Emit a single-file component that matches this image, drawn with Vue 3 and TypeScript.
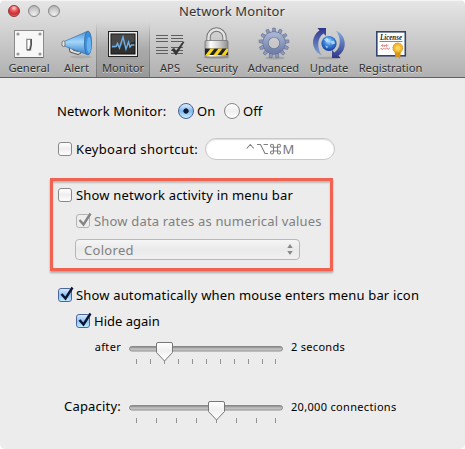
<script setup lang="ts">
import { ref } from 'vue'

interface Tool {
  id: string
  label: string
}

const tools: Tool[] = [
  { id: 'general', label: 'General' },
  { id: 'alert', label: 'Alert' },
  { id: 'monitor', label: 'Monitor' },
  { id: 'aps', label: 'APS' },
  { id: 'security', label: 'Security' },
  { id: 'advanced', label: 'Advanced' },
  { id: 'update', label: 'Update' },
  { id: 'registration', label: 'Registration' },
]
const active = ref('monitor')
const enabled = ref(true)

const delayTicks: number[] = [7.5, 21.5, 35.5, 49.5, 63.5, 77.5, 91.5, 105.5, 119.5, 133.5, 146.5]
const capacityTicks: number[] = [7.5, 27.5, 47.5, 67.5, 87.5, 107.5, 127.5, 146.5]
const teeth: number[] = Array.from({ length: 13 }, (_, i) => (i * 360) / 13)
</script>

<template>
  <div class="window">
    <svg class="defs" width="0" height="0">
      <defs>
        <linearGradient id="thumb" x1="0" y1="0" x2="0" y2="1">
          <stop offset="0" stop-color="#fff" /><stop offset=".45" stop-color="#f0f0f0" /><stop offset="1" stop-color="#fff" />
        </linearGradient>
        <linearGradient id="track" x1="0" y1="0" x2="0" y2="1">
          <stop offset="0" stop-color="#777" /><stop offset=".4" stop-color="#b4b4b4" /><stop offset="1" stop-color="#cfcfcf" />
        </linearGradient>
        <linearGradient id="horn" x1="0" y1="0" x2="0" y2="1">
          <stop offset="0" stop-color="#4d95d6" /><stop offset=".45" stop-color="#a5d6fb" /><stop offset="1" stop-color="#3580c8" />
        </linearGradient>
        <linearGradient id="steel" x1="0" y1="0" x2="1" y2="0">
          <stop offset="0" stop-color="#a5a5a5" /><stop offset=".25" stop-color="#fff" /><stop offset=".6" stop-color="#d2d2d2" /><stop offset="1" stop-color="#8d8d8d" />
        </linearGradient>
        <linearGradient id="gear" x1="0" y1="0" x2="0" y2="1">
          <stop offset="0" stop-color="#a7b3d3" /><stop offset="1" stop-color="#7180a9" />
        </linearGradient>
        <radialGradient id="globe" cx=".5" cy=".35" r=".65">
          <stop offset="0" stop-color="#b9e2ff" /><stop offset=".45" stop-color="#3f86dd" /><stop offset="1" stop-color="#143d9d" />
        </radialGradient>
        <linearGradient id="arcl" x1="0" y1="0" x2="0" y2="1">
          <stop offset="0" stop-color="#30358b" /><stop offset="1" stop-color="#7ea5d8" />
        </linearGradient>
        <linearGradient id="arcr" x1="0" y1="0" x2="0" y2="1">
          <stop offset="0" stop-color="#86aede" /><stop offset="1" stop-color="#30358b" />
        </linearGradient>
      </defs>
    </svg>

    <header class="chrome">
      <div class="titlebar">
        <div class="lights"><i class="light red"></i><i class="light"></i><i class="light"></i></div>
        <h1 class="title">Network Monitor</h1>
      </div>
      <nav class="toolbar">
        <button v-for="t in tools" :key="t.id" class="tool" :class="[t.id, { active: active === t.id }]" @click="active = t.id">
          <svg class="icon" width="32" height="34" viewBox="0 0 32 34">
            <g v-if="t.id === 'general'">
              <rect x="1.5" y="4.5" width="29" height="27" fill="#f7f7f7" stroke="#8b8b8b" />
              <path d="M2 31.5H30" stroke="#666" />
              <g fill="#9a9a9a"><circle cx="5" cy="8" r="1.6" /><circle cx="27" cy="8" r="1.6" /><circle cx="5" cy="28" r="1.6" /><circle cx="27" cy="28" r="1.6" /></g>
              <rect x="13.5" y="13" width="4.500" height="11" fill="#e4e4e4" stroke="#aaa" stroke-width=".8" />
              <path d="M14 13.500h3.500v5l-1 5H14z" fill="#fff" stroke="#777" stroke-width=".8" /><path d="M18.300 13v6l-1.300 5h-3" fill="none" stroke="#444" stroke-width="1.200" />
            </g>
            <g v-else-if="t.id === 'alert'">
              <ellipse cx="20" cy="31" rx="11" ry="1.500" fill="#999" opacity=".5" />
              <path d="M8 21l1 5 8 2.500 3-1.500-1-3-2 1.500-5-1.500v-4" fill="#ddd" stroke="#555" />
              <path d="M2 16L26 5.500v23L2 19.500z" fill="url(#horn)" stroke="#3774ad" stroke-width=".7" />
              <ellipse cx="27" cy="17" rx="3.600" ry="12" fill="#3e8fdb" stroke="#28669f" stroke-width=".7" />
              <ellipse cx="28" cy="19" rx="2.200" ry="8" fill="#66b3f0" />
              <rect x="1" y="15" width="3" height="5.500" rx="1.400" fill="#e1e5e8" stroke="#555" stroke-width=".7" />
            </g>
            <g v-else-if="t.id === 'monitor'">
              <rect x="1.500" y="5.500" width="29" height="25" fill="#ececec" stroke="#222" />
              <rect x="4" y="8" width="24" height="20" fill="#303030" stroke="#111" />
              <path d="M4.500 8.500h23v7l-23 7z" fill="#484848" />
              <path d="M5 20.500h4l1.500-3 2 4.500 3.500-11 3 12 2.500-7 1.500 5 1.500-2h3" fill="none" stroke="#6cb0e6" stroke-width="1.400" />
              <path d="M2 32h28" stroke="#999" />
            </g>
            <g v-else-if="t.id === 'aps'">
              <path d="M2 9.500h12M2 12.500h12M2 15.500h12M17 9.500h12M17 12.500h12M17 15.500h12M2 21.500h12M2 24.500h12M2 27.500h12M17 21.500h12M17 24.500h12M17 27.500h12" stroke="#5e5e5e" stroke-width="1" />
              <path d="M18 23.500l2.200-1 1.800 3 6.500-9 1.500-.5-8 13z" fill="#333" stroke="#333" stroke-width=".8" />
            </g>
            <g v-else-if="t.id === 'security'">
              <ellipse cx="15.500" cy="31.500" rx="13" ry="1.300" fill="#888" opacity=".6" />
              <path d="M7.500 16V11.500a8 8 0 0 1 16 0V16" fill="none" stroke="#777" stroke-width="4.400" />
              <path d="M7.500 16V11.500a8 8 0 0 1 16 0V16" fill="none" stroke="#e4e4e4" stroke-width="2.400" />
              <rect x="4" y="14.500" width="23" height="16.500" rx="1" fill="url(#steel)" stroke="#777" stroke-width=".8" />
              <rect x="4" y="22.500" width="23" height="6.500" fill="#222" />
              <path d="M4.500 29l5-6.500h4L8.500 29zM12.500 29l5-6.500h4L16.500 29zM20.500 29l5-6.500H27v3L24.500 29z" fill="#f6d417" />
            </g>
            <g v-else-if="t.id === 'advanced'">
              <ellipse cx="17" cy="32" rx="10" ry="1.500" fill="#888" opacity=".5" />
              <g fill="#8c99bd" stroke="#596586" stroke-width=".5"><path v-for="a in teeth" :key="a" d="M14 7l.7-5h2.600l.7 5z" :transform="`rotate(${a} 16 17)`" /></g>
              <circle cx="16" cy="17" r="8.400" fill="none" stroke="#596586" stroke-width="6" />
              <circle cx="16" cy="17" r="8.400" fill="none" stroke="url(#gear)" stroke-width="5.100" />
            </g>
            <g v-else-if="t.id === 'update'">
              <ellipse cx="16" cy="32" rx="12" ry="1.300" fill="#888" opacity=".5" />
              <path d="M9 29.500C-3 24 -2 10 6.500 4.500L4.500 2H13v8l-2.500-2.500C4 12 3.500 22 9 29.500z" fill="url(#arcl)" />
              <path d="M23 4.500C34.500 10 34 24 25.500 29.500l2 2.500H19v-8l2.500 2.500C28 22 28.500 12 23 4.500z" fill="url(#arcr)" />
              <circle cx="16" cy="17.500" r="7.600" fill="url(#globe)" />
              <path d="M11 13.500l3-2 2 2-2 3zM18 15.500l3-1 1 3-3 1zM12 19.500l3 1-1 2zM18 21.500l2-1" fill="#c2eaff" opacity=".8" />
            </g>
            <g v-else>
              <rect x="1.800" y="5.800" width="28.500" height="24" fill="#fff" stroke="#34466f" stroke-width="1.600" />
              <text x="5" y="14" class="license" textLength="22" lengthAdjust="spacingAndGlyphs">License</text>
              <path d="M4.500 15.500h23" stroke="#555" stroke-width=".7" />
              <path d="M6 20l1.500-1.500v2l2-1.500v1.500l2-2v2l2-1.500M5 23.500l1.500-1.500.5 1.500 2-1 1 .8 2-1.500 1 1.500 2-1.500" fill="none" stroke="#e08080" stroke-width=".9" />
              <path d="M19.500 25l1 7 2-1.500L25 33l1-8z" fill="#d6941a" />
              <circle cx="22.800" cy="22" r="5" fill="#f2b72d" stroke="#cc8e16" stroke-width=".8" stroke-dasharray="1.800 .7" />
              <circle cx="22.800" cy="22" r="2.600" fill="#fbd559" />
            </g>
          </svg>
          <span class="label">{{ t.label }}</span>
        </button>
      </nav>
    </header>

    <main class="form">
      <div class="row power">
        <span class="t-power">Network Monitor:</span>
        <i class="radio" :class="{ on: enabled }" @click="enabled = true"></i><span class="t-on">On</span>
        <i class="radio second" :class="{ on: !enabled }" @click="enabled = false"></i><span class="t-off">Off</span>
      </div>
      <div class="row shortcut">
        <i class="check"></i><span class="t-key">Keyboard shortcut:</span>
        <div class="field">
          <svg width="36" height="12" viewBox="0 0 36 12" fill="none" stroke="#808080" stroke-width="1.100">
            <path d="M.8 5.500L4.300 1.500l3.500 4M11 1.500h3.500l4.500 9h3M17.500 1.500H22" />
            <path d="M27.500 4v4.500M31.500 4v4.500M27.500 4.300h4M27.500 8h4M27.500 4.300H26a1.500 1.500 0 1 1 1.500-1.500zM31.500 4.300H33a1.500 1.500 0 1 0-1.500-1.500zM27.500 8H26a1.500 1.500 0 1 0 1.500 1.500zM31.500 8H33a1.500 1.500 0 1 1-1.500 1.500z" />
          </svg>
          <span>M</span>
        </div>
      </div>

      <section class="highlight">
        <div class="row"><i class="check"></i><span class="t-activity">Show network activity in menu bar</span></div>
        <div class="row sub off">
          <i class="check on"><svg width="18" height="18" viewBox="0 0 18 18"><path d="M3.500 8l4 4.500L14.500 1.500" /></svg></i>
          <span class="t-rates">Show data rates as numerical values</span>
        </div>
        <div class="select">
          <span class="t-colored">Colored</span>
          <svg width="6" height="11" viewBox="0 0 6 11"><path d="M3 0l2.700 4H.3zM3 11L.3 7h5.400z" fill="#888" /></svg>
        </div>
      </section>

      <div class="row auto">
        <i class="check on"><svg width="18" height="18" viewBox="0 0 18 18"><path d="M3.500 8l4 4.500L14.500 1.500" /></svg></i>
        <span class="t-auto">Show automatically when mouse enters menu bar icon</span>
      </div>
      <div class="row hide">
        <i class="check on"><svg width="18" height="18" viewBox="0 0 18 18"><path d="M3.500 8l4 4.500L14.500 1.500" /></svg></i>
        <span class="t-hide">Hide again</span>
      </div>

      <div class="slider delay">
        <span class="name small t-after">after</span>
        <svg width="156" height="26" viewBox="0 0 156 26">
          <rect x=".5" y="5.500" width="153" height="4.500" rx="2.200" fill="url(#track)" stroke="#858585" stroke-width=".9" />
          <path v-for="x in delayTicks" :key="x" :d="`M${x} 18v5`" stroke="#929292" />
          <path d="M29 1.500h13q1.500 0 1.500 1.500v8.500L35.500 20l-8-8.500V3q0-1.500 1.500-1.500z" fill="url(#thumb)" stroke="#777" />
        </svg>
        <span class="value small t-seconds">2 seconds</span>
      </div>
      <div class="slider capacity">
        <span class="name t-capacity">Capacity:</span>
        <svg width="156" height="26" viewBox="0 0 156 26">
          <rect x=".5" y="5.500" width="153" height="4.500" rx="2.200" fill="url(#track)" stroke="#858585" stroke-width=".9" />
          <path v-for="x in capacityTicks" :key="x" :d="`M${x} 18v5`" stroke="#929292" />
          <path d="M81 1.500h13q1.500 0 1.500 1.500v8.500L87.500 20l-8-8.500V3q0-1.500 1.500-1.500z" fill="url(#thumb)" stroke="#777" />
        </svg>
        <span class="value small t-connections">20,000 connections</span>
      </div>
    </main>
  </div>
</template>

<style>
body { background: #fff; }
</style>

<style scoped>
.window { width: 465px; height: 449px; overflow: hidden; box-sizing: border-box; background: #ececec; border-radius: 5px; font: 13px/18px "Noto Sans", "Open Sans", sans-serif; color: #000; white-space: nowrap; }
.window * { box-sizing: border-box; }
.defs { display: block; }
.chrome { height: 78px; background: linear-gradient(#e6e6e6, #cecece 45%, #b0b0b0); border-top: 1px solid #f5f5f5; border-bottom: 1px solid #606060; }
.titlebar { display: grid; grid-template-columns: 171px 1fr; height: 22px; align-items: start; }
.lights { display: flex; gap: 8px; padding: 4px 0 0 8px; }
.light { width: 12px; height: 12px; border: 1px solid #888; border-radius: 50%; background: radial-gradient(circle at 50% 85%, #eee, #cfcfcf 50%, #aaa); }
.light.red { border-color: #8e3336; background: radial-gradient(circle at 50% 20%, #ffd7d7 0, #ee5559 35%, #cb2c34 65%, #ff8d8d); }
.title { margin: 0; padding: 1px 0 0 8px; font-size: 13px; line-height: 18px; font-weight: 400; color: #333; letter-spacing: .08px; text-shadow: 0 1px #eee; }
.toolbar { display: flex; height: 54px; }
.tool { display: flex; flex-direction: column; align-items: center; padding: 3px 0 0; border: 0; background: none; font: 11.200px/16px "Noto Sans", sans-serif; color: #303030; text-shadow: 0 1px #ddd; }
.icon { display: block; flex: none; }
.label { line-height: 16px; }
.general { width: 58px; padding-right: 0; }
.alert { width: 37px; }
.monitor { width: 54px; margin-left: 1px; }
.aps { width: 40px; }
.security { width: 54px; }
.advanced { width: 59px; }
.update { width: 52px; }
.registration { width: 71px; }
.license { font: italic 700 8px "Liberation Serif", serif; fill: #222; text-shadow: none; }
.tool.active { border: solid #777; border-width: 0 1px; border-image: linear-gradient(transparent, #999 40%, #777) 1; background: linear-gradient(#0000, #0002 50%, #0002); }
.form { display: flex; flex-direction: column; padding: 24px 0 0 50px; }
.row { display: flex; align-items: center; height: 18px; padding-left: 8px; }
.power { padding-left: 7px; }
.t-power { width: 121px; letter-spacing: .07px; }
.t-on { margin-left: 3px; width: 27px; }
.t-off { margin-left: 3px; }
.t-activity { letter-spacing: .19px; }
.t-rates { letter-spacing: .18px; }
.t-colored { letter-spacing: .3px; }
.t-auto { letter-spacing: .165px; }
.t-after, .t-seconds { letter-spacing: .3px; margin-top: -1px; }
.t-connections { letter-spacing: .32px; }
.t-capacity { margin-top: -3px; letter-spacing: .2px; }
.radio { width: 16px; height: 16px; border: 1px solid #858585; border-radius: 50%; background: linear-gradient(#fff, #eee 50%, #fff); }
.radio.on { border-color: #4a5d96; background: radial-gradient(circle, #111b38 0 2.300px, transparent 3px), linear-gradient(#e0efff, #81b7ec 50%, #c5f0ff); }
.check { position: relative; flex: none; width: 14px; height: 14px; margin-right: 4px; border: 1px solid #898989; border-radius: 3px; background: linear-gradient(#fff, #eee 50%, #fff); }
.check svg { position: absolute; left: -1px; top: -3px; fill: none; stroke: #0c1634; stroke-width: 2.400; }
.check.on { border-color: #4c669c; background: linear-gradient(#d7e9ff, #90c0f2 50%, #bdebff); }
.shortcut { height: 22px; margin-top: 18px; }
.t-key { width: 129px; letter-spacing: .33px; }
.field { display: flex; align-items: center; justify-content: center; gap: 1px; width: 130px; height: 22px; border: 1px solid #c9c9c9; border-radius: 11px; background: #fff; color: #777; box-shadow: inset 0 1px 1px #ddd; }
.highlight { width: 283px; height: 93px; margin-top: 18px; padding: 5px 0 0 5px; border: 3px solid #f26250; box-shadow: 0 2px 2px #aaa, inset 0 2px 2px #bbb; }
.highlight .row { padding-left: 0; }
.highlight .sub { margin-top: 8px; padding-left: 18px; }
.off { color: #808080; }
.off .check { border-color: #b3b3b3; background: #eee; }
.off .check svg { stroke: #858585; }
.select { display: flex; align-items: center; justify-content: space-between; width: 225px; height: 21px; margin: 9px 0 0 17px; padding: 0 6px 0 8px; border: 1px solid #b7b7b7; border-radius: 4px; background: linear-gradient(#f5f5f5, #eaeaea 50%, #f1f1f1); color: #808080; }
.auto { margin-top: 15px; }
.hide { margin-top: 8px; padding-left: 26px; }
.slider { display: grid; grid-template-columns: 79px 162px auto; align-items: start; height: 26px; }
.delay { margin-top: 11px; }
.capacity { margin-top: 33px; }
.name { text-align: right; padding-right: 8px; }
.small { font-size: 11px; line-height: 13px; }
.slider svg { display: block; }
</style>
